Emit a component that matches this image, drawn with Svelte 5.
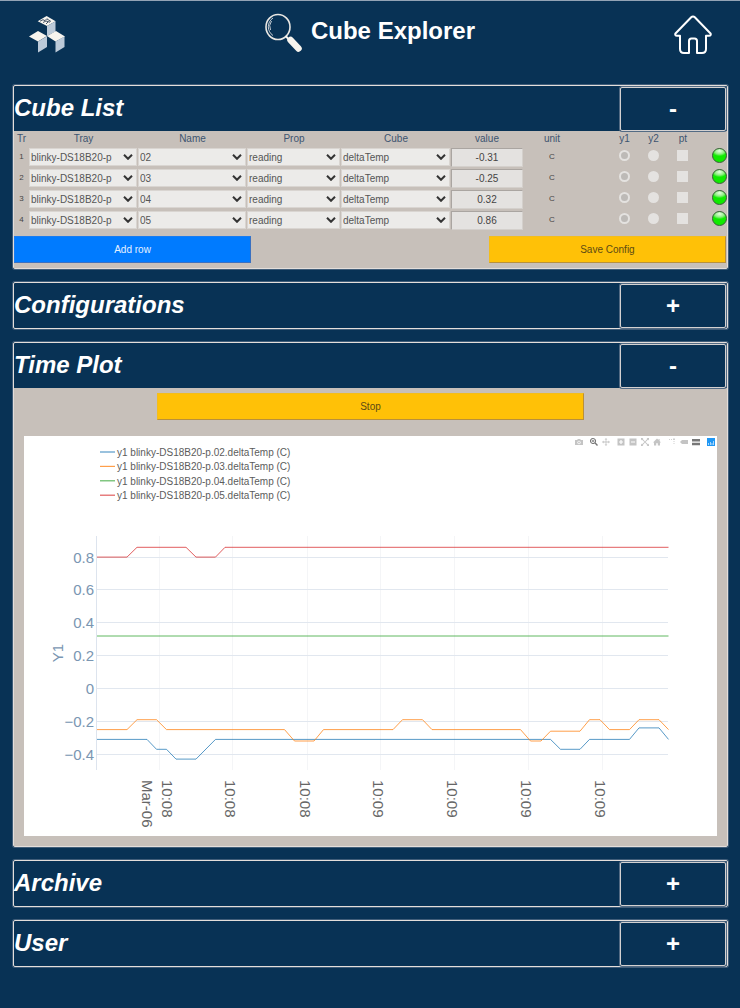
<script>
  let open = $state({ cubes: true, configs: false, plot: true, archive: false, user: false });

  const rows = [
    { tr: 1, name: '02', value: '-0.31' },
    { tr: 2, name: '03', value: '-0.25' },
    { tr: 3, name: '04', value: '0.32' },
    { tr: 4, name: '05', value: '0.86' }
  ];

  const columns = [15, 109, 109, 94, 110, 72, 58, 29, 29, 29, 30, 29];
  const total = columns.reduce((a, b) => a + b, 0);

  const yOf = (v) => 252.5 - 164.2 * v;
  const ticks = [0.8, 0.6, 0.4, 0.2, 0, -0.2, -0.4];
  const times = [
    { x: 135.5, at: 138, label: '10:08' },
    { x: 208.5, at: 201, label: '10:08' },
    { x: 283.5, at: 276, label: '10:08' },
    { x: 356.5, at: 349, label: '10:09' },
    { x: 430.5, at: 423, label: '10:09' },
    { x: 504.5, at: 497, label: '10:09' },
    { x: 578.5, at: 571, label: '10:09' }
  ];

  const series = [
    {
      name: '02', color: '#1f77b4',
      points: [[73, -0.31], [123, -0.31], [132.5, -0.37], [142.5, -0.37], [152, -0.43], [172, -0.43], [191.5, -0.31], [526.5, -0.31], [536.5, -0.37], [556, -0.37], [565.5, -0.31], [605.5, -0.31], [615, -0.24], [635, -0.24], [644.5, -0.31]]
    },
    {
      name: '03', color: '#ff7f0e',
      points: [[73, -0.25], [103, -0.25], [113, -0.19], [132.5, -0.19], [142.5, -0.25], [260.5, -0.25], [270.5, -0.32], [290, -0.32], [299.5, -0.25], [369, -0.25], [378.5, -0.19], [398.5, -0.19], [408, -0.25], [496.5, -0.25], [506.5, -0.32], [517, -0.32], [526.5, -0.26], [556, -0.26], [565.5, -0.19], [576, -0.19], [585.5, -0.25], [605.5, -0.25], [615, -0.19], [635, -0.19], [644.5, -0.25]]
    },
    { name: '04', color: '#2ca02c', points: [[73, 0.32], [644.5, 0.32]] },
    {
      name: '05', color: '#d62728',
      points: [[73, 0.8], [103, 0.8], [113, 0.86], [162, 0.86], [172, 0.8], [191.5, 0.8], [201, 0.86], [644.5, 0.86]]
    }
  ];
  const line = (pts) => pts.map(([x, v]) => `${x},${yOf(v).toFixed(1)}`).join(' ');

  const tools = [
    [{ n: 'Download plot', d: 'M0 2h2l1-1h2l1 1h2v5H0zM4 2.8a1.7 1.7 0 1 0 .01 0zM4 3.6a.9.9 0 1 1-.01 0z' }],
    [
      { n: 'Zoom', on: true, d: 'M3 0a3 3 0 1 0 1.6 5.5L7 8l1-1-2.4-2.4A3 3 0 0 0 3 0zM3 1.1A1.9 1.9 0 1 1 3 4.9 1.9 1.9 0 0 1 3 1.1zM2.6 2h.8v.6H4v.8h-.6V4h-.8v-.6H2v-.8h.6z' },
      { n: 'Pan', d: 'M4 0l1.4 1.6h-1v2h2v-1L8 4 6.4 5.4v-1h-2v2h1L4 8 2.6 6.4h1v-2h-2v1L0 4l1.6-1.4v1h2v-2h-1z' }
    ],
    [
      { n: 'Zoom in', d: 'M.5.5h7v7h-7zM3.4 2v1.4H2v1.2h1.4V6h1.2V4.6H6V3.4H4.6V2z' },
      { n: 'Zoom out', d: 'M.5.5h7v7h-7zM2 3.4v1.2h4V3.4z' },
      { n: 'Autoscale', d: 'M0 0h2.4L1.6.8 4 3.4 6.4.8 5.6 0H8v2.4l-.8-.8L4.6 4l2.6 2.4.8-.8V8H5.6l.8-.8L4 4.6 1.6 7.2l.8.8H0V5.6l.8.8L3.4 4 .8 1.6 0 2.4z' },
      { n: 'Reset axes', d: 'M4 .5l1.6 1.6V1h1v2.1L8 4.4H7v3H4.8V5.2H3.2v2.2H1v-3H0z' }
    ],
    [
      { n: 'Toggle spike lines', d: 'M1 1h1v.8H1zM3 1h1v.8H3zM5.200 .5h1.600v1.600H5.200zM5.600 3h.8v1h-.8zM5.600 5h.8v1h-.8z' },
      { n: 'Show closest data', d: 'M0 4l2-2h6v4H2z' },
      { n: 'Compare data', on: true, d: 'M0 1h8v2.5H0zM0 4.8h8v2.4H0z' }
    ]
  ];
</script>

{#snippet head(key, title)}
  <div class="head">
    <h2>{title}</h2>
    <button type="button" class="toggle" aria-label="Toggle {title}" aria-expanded={open[key]} onclick={() => (open[key] = !open[key])}>{open[key] ? '-' : '+'}</button>
  </div>
{/snippet}

{#snippet pick(label, value)}
  <div class="pick">
    <select aria-label={label}><option>{value}</option></select>
    <svg width="10" height="6" viewBox="0 0 10 6" aria-hidden="true"><path d="M1 .8l4 4 4-4" fill="none" stroke="#333" stroke-width="2" /></svg>
  </div>
{/snippet}

<div class="page">
  <header>
    <svg class="logo" width="36" height="38" viewBox="0 0 36 38" aria-hidden="true">
      <path d="M8.700 6.200L17.600 1l9 5.200L18 11z" fill="#f7f4ee" />
      <path d="M11 6.200l3-1.500 2 1 2-2.200M14 7.500l3-1.500 4 1.200M18 4l4 2.500M17 9l2-2" fill="none" stroke="#465568" stroke-width="1" />
      <path d="M18 11l8.500-4.800V16.500L18 21z" fill="#bccad9" />
      <path d="M0 21.500L9 16l9 5-9 5.500z" fill="#f7f4ee" />
      <path d="M18 21l9-5 9 5.500-9.500 5z" fill="#f7f4ee" />
      <path d="M9 26.500l9-5.300V32L9 37.500zM26.500 26.500l9-5V32l-9 5.500z" fill="#bccad9" />
    </svg>
    <div class="brand">
      <svg width="38" height="40" viewBox="0 0 38 40" aria-hidden="true">
        <ellipse cx="13" cy="14" rx="12" ry="12.500" fill="none" stroke="#e9e7e3" stroke-width="1.600" />
        <path d="M8 5A10.500 10.500 0 0 0 8 22.500M6.500 8a9 9 0 0 0-1 9" fill="none" stroke="#d9dce0" stroke-width=".9" />
        <path d="M20.500 23l3 3" stroke="#f7f4ee" stroke-width="2" />
        <path d="M25.500 27l8 8.500" stroke="#f7f4ee" stroke-width="6.500" stroke-linecap="round" />
      </svg>
      <h1>Cube Explorer</h1>
    </div>
    <a class="home" href="#home" aria-label="Home">
      <svg width="38" height="40" viewBox="0 0 38 40" aria-hidden="true">
        <path d="M17.200 2.200a2.500 2.500 0 0 1 3.600 0L36.300 18.200c1 1.200.3 2.600-1.300 2.600h-3V34q0 4-4 4h-5V26q0-2.500-2.500-2.500h-3Q15 23.500 15 26v12h-5q-4 0-4-4V20.800H3c-1.600 0-2.300-1.400-1.300-2.600z" fill="none" stroke="#fff" stroke-width="2" stroke-linejoin="round" />
      </svg>
    </a>
  </header>

  <main>
    <section>
      {@render head('cubes', 'Cube List')}
      {#if open.cubes}
        <div class="cubes">
          <table>
            <colgroup>
              {#each columns as c}<col style="width: {(c / total) * 100}%" />{/each}
            </colgroup>
            <thead>
              <tr><th>Tr</th><th>Tray</th><th>Name</th><th>Prop</th><th>Cube</th><th>value</th><th>unit</th><th></th><th>y1</th><th>y2</th><th>pt</th><th></th></tr>
            </thead>
            <tbody>
              {#each rows as r}
                <tr>
                  <td class="tiny">{r.tr}</td>
                  <td>{@render pick('Tray', 'blinky-DS18B20-p')}</td>
                  <td>{@render pick('Name', r.name)}</td>
                  <td>{@render pick('Prop', 'reading')}</td>
                  <td>{@render pick('Cube', 'deltaTemp')}</td>
                  <td><input class="value" type="text" aria-label="value" value={r.value} disabled /></td>
                  <td class="tiny">C</td>
                  <td></td>
                  <td><input class="mark" type="radio" name="axis{r.tr}" aria-label="y1" checked disabled /></td>
                  <td><input class="mark" type="radio" name="axis{r.tr}" aria-label="y2" disabled /></td>
                  <td><input class="mark" type="checkbox" aria-label="pt" disabled /></td>
                  <td><span class="led"></span></td>
                </tr>
              {/each}
            </tbody>
          </table>
          <div class="actions">
            <button type="button" class="act blue">Add row</button>
            <button type="button" class="act amber">Save Config</button>
          </div>
        </div>
      {/if}
    </section>

    <section>{@render head('configs', 'Configurations')}</section>

    <section>
      {@render head('plot', 'Time Plot')}
      {#if open.plot}
        <div class="plot">
          <button type="button" class="act amber stop">Stop</button>
          <div class="chart">
            <div class="modebar">
              {#each tools as group}
                <div class="group">
                  {#each group as t}
                    <button type="button" aria-label={t.n} class:on={t.on}>
                      <svg width="8" height="8" viewBox="0 0 8 8" aria-hidden="true"><path d={t.d} fill="currentColor" fill-rule="evenodd" /></svg>
                    </button>
                  {/each}
                </div>
              {/each}
              <a href="#plotly" aria-label="Produced with Plotly">
                <svg width="8" height="8" viewBox="0 0 8 8" aria-hidden="true"><path d="M0 0h8v8H0z" fill="#1f97f4" /><path d="M1.500 7V5M3.500 7V4M5 7V5M6.500 7V3" stroke="#a8d6fb" stroke-width="1" /></svg>
              </a>
            </div>
            <svg class="graph" viewBox="0 0 693 400" role="img" aria-label="Y1 over time">
              {#each times as t}
                <path d="M{t.x} 100V334" stroke="#f4f5f7" />
                <text class="time" transform="translate({t.at} 344) rotate(90)">{t.label}</text>
              {/each}
              <text class="time" transform="translate(118 344) rotate(90)">Mar-06</text>
              {#each ticks as v}
                <path d="M73 {Math.floor(yOf(v)) + 0.5}H644" stroke="#e1e7ef" />
                <text class="tick" x="70" y={Math.floor(yOf(v)) + 6} text-anchor="end">{String(v).replace('-', '−')}</text>
              {/each}
              <path d="M72.500 100V334" stroke="#dde4ee" />
              <text class="tick" transform="translate(39 217) rotate(-90)" text-anchor="middle">Y1</text>
              {#each series as s, i}
                <polyline points={line(s.points)} fill="none" stroke={s.color} stroke-width="1" stroke-opacity=".75" />
                <path d="M76 {16 + i * 14.4}h15" stroke={s.color} stroke-width="1.200" stroke-opacity=".75" />
                <text class="legend" x="93" y={20 + Math.round(i * 14.4)}>y1 blinky-DS18B20-p.{s.name}.deltaTemp (C)</text>
              {/each}
            </svg>
          </div>
        </div>
      {/if}
    </section>

    <section>{@render head('archive', 'Archive')}</section>
    <section>{@render head('user', 'User')}</section>
  </main>
</div>

<style>
  :global(body) {
    background: #083255;
  }
  .page,
  button,
  input,
  select {
    font-family: 'Liberation Sans', Arial, sans-serif;
  }
  .page {
    border-top: 1px solid #93a3b5;
    font-size: 10px;
    color: #fff;
  }
  header {
    display: grid;
    grid-template-columns: 1fr auto 1fr;
    align-items: start;
    padding: 12px 28px 0;
    height: 72px;
    box-sizing: border-box;
  }
  .logo {
    margin-top: 2px;
    margin-left: 1px;
  }
  .brand {
    display: flex;
    gap: 8px;
  }
  h1,
  h2 {
    margin: 0;
    font-size: 24px;
    line-height: 36px;
  }
  .home {
    justify-self: end;
    display: block;
    margin-top: 2px;
  }
  .home svg {
    display: block;
  }
  main {
    display: grid;
    gap: 13px;
    padding: 12px 12px 40px 13px;
  }
  section {
    border: 1px solid #e3dedb;
    border-radius: 2px;
    box-shadow: 0 0 0 1px #405d79;
  }
  .head {
    display: grid;
    grid-template-columns: 85% 15%;
    align-items: center;
    height: 45px;
  }
  h2 {
    font-style: italic;
    line-height: 44px;
    height: 45px;
  }
  .toggle {
    height: 44px;
    margin-right: 1px;
    background: none;
    border: 1px solid #d3d1d1;
    border-radius: 2px;
    box-shadow: 0 0 0 1px #536b84;
    color: #fff;
    font-size: 24px;
    font-weight: bold;
    padding: 0;
  }
  .cubes,
  .plot {
    background: #c7c0ba;
  }
  .cubes {
    padding-bottom: 5px;
  }
  table {
    width: 100%;
    table-layout: fixed;
    border-collapse: collapse;
  }
  th,
  td {
    padding: 0;
    text-align: center;
  }
  th {
    height: 17px;
    line-height: 16px;
    vertical-align: top;
    font-weight: normal;
    color: #3d5470;
  }
  td {
    height: 21px;
    color: #444;
    vertical-align: middle;
  }
  .tiny {
    font-size: 8px;
    line-height: 18px;
    vertical-align: top;
  }
  .pick {
    display: grid;
    align-items: center;
    height: 18px;
    margin: 0 1px 3px 0;
  }
  .pick select,
  .pick svg {
    grid-area: 1 / 1;
  }
  .pick svg {
    justify-self: end;
    margin-right: 4px;
    pointer-events: none;
  }
  select {
    appearance: none;
    width: 100%;
    height: 18px;
    padding: 0 1px;
    border: 1px solid #d9d5d1;
    border-radius: 0;
    background: #ecebe9;
    color: #555;
    font-size: 10px;
  }
  .value {
    display: block;
    box-sizing: border-box;
    width: 100%;
    height: 19px;
    margin-bottom: 2px;
    padding: 0;
    border: 1px solid #d4d0cc;
    border-top-color: #aaa5a1;
    border-left-color: #aaa5a1;
    background: #e4e2e0;
    color: #444;
    font-size: 10px;
    text-align: center;
  }
  .mark {
    appearance: none;
    box-sizing: border-box;
    display: block;
    width: 11px;
    height: 11px;
    margin: 0 auto 6px;
    background: #e4e2e0;
  }
  .mark[type='radio'] {
    border-radius: 50%;
  }
  .mark[type='radio']:checked {
    border: 2px solid #e4e2e0;
    background: #bdbab7;
  }
  .led {
    display: block;
    box-sizing: border-box;
    width: 15px;
    height: 15px;
    margin: 0 0 6px auto;
    border: 1px solid #3d5a3d;
    border-radius: 50%;
    background: radial-gradient(ellipse 60% 40% at 50% 15%, #e6ffe2, #8df080 60%, transparent), #10ea00;
  }
  .actions {
    display: flex;
    justify-content: space-between;
    margin: 4px 1px 0 0;
  }
  .act {
    width: 33.3%;
    height: 27px;
    padding: 0;
    border: 1px solid;
    font-size: 10px;
  }
  .blue {
    background: #007bff;
    border-color: #1a7cf0 #3a70c0 #3a70c0 #1a7cf0;
    color: #e6f1ff;
  }
  .amber {
    background: #ffc107;
    border-color: #f3bd1c #b9903a #b9903a #f3bd1c;
    color: #5c4a14;
  }
  .plot {
    padding: 5px 10px 10px;
  }
  .stop {
    display: block;
    width: 61.6%;
    margin: 0 auto 16px;
  }
  .chart {
    position: relative;
    background: #fff;
  }
  .graph {
    display: block;
    width: 100%;
    height: auto;
  }
  .modebar {
    position: absolute;
    top: 2px;
    right: 2px;
    display: flex;
    gap: 7px;
  }
  .group {
    display: flex;
    gap: 4px;
  }
  .modebar button,
  .modebar a {
    display: block;
    width: 8px;
    height: 8px;
    padding: 0;
    border: 0;
    background: none;
    color: #c4c4c4;
  }
  .modebar .on {
    color: #777;
  }
  .modebar svg {
    display: block;
  }
  .legend {
    font-size: 10px;
    fill: #5c5c5c;
  }
  .time {
    font-size: 15px;
    fill: #666;
  }
  .tick {
    font-size: 15px;
    fill: #7a96b2;
  }
</style>
